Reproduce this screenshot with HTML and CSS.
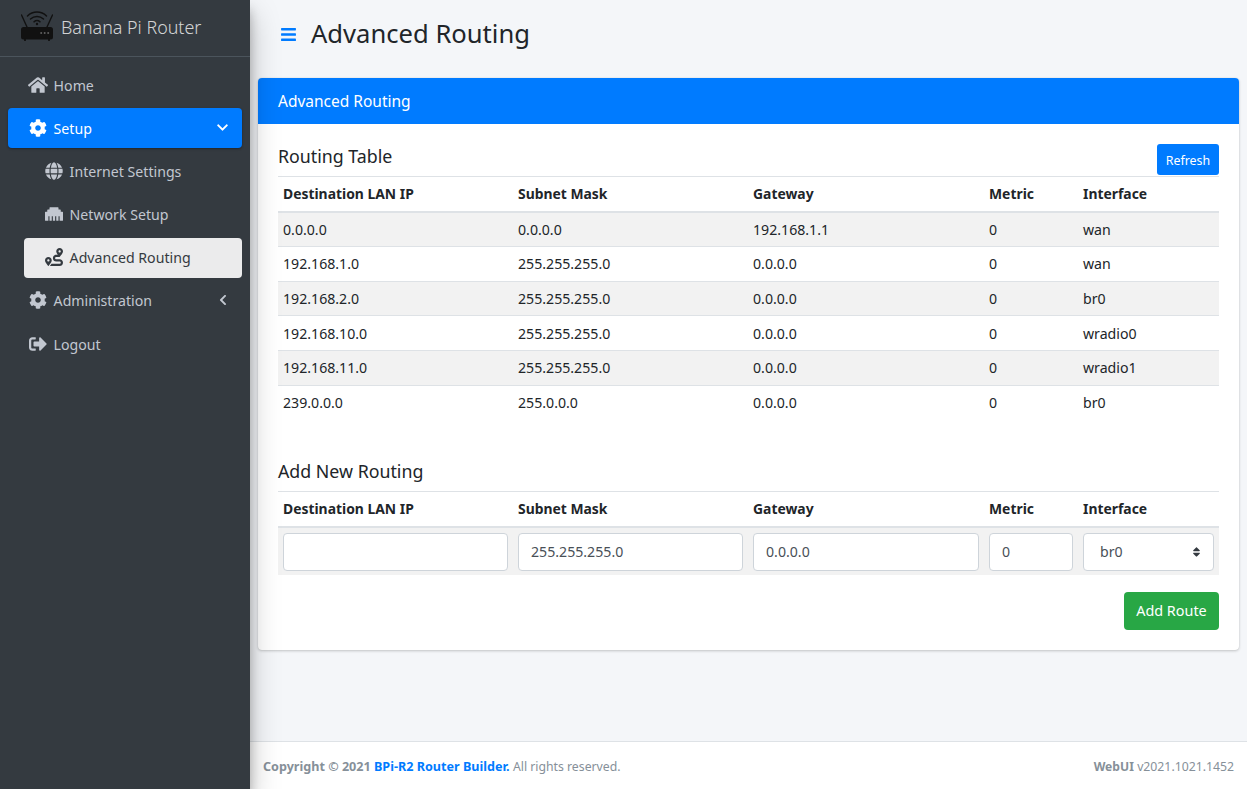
FILE: index.html
```html
<!doctype html>
<html>
<head>
<meta charset="utf-8">
<title>Advanced Routing</title>
<link rel="stylesheet" href="styles.css">
</head>
<body>
<div class="wrapper">
  <aside class="sidebar">
    <div class="brand">
      <svg class="brand-logo" viewBox="0 0 32 30" fill="none" stroke="#111" stroke-linecap="round">
        <path d="M.5 4l5.500 12M31.500 4l-5.500 12" stroke-width="1.400"/>
        <path d="M6.500 5a13.500 13.500 0 0 1 19 0" stroke-width="1.500"/>
        <path d="M9.500 8a9.500 9.500 0 0 1 13 0" stroke-width="1.500"/>
        <path d="M13 10.800a4.800 4.800 0 0 1 6 0" stroke-width="1.500"/>
        <circle cx="16" cy="13" r="1.200" fill="#111" stroke="none"/>
        <rect x="0" y="16" width="32" height="12.500" rx="2.500" fill="#111" stroke="none"/>
        <path d="M4 28.500v1M28 28.500v1" stroke-width="1.800"/>
        <path d="M20 22h.4M23.500 22h.4M27 22h.4" stroke="#777" stroke-width="1.600"/>
      </svg>
      <span class="brand-text">Banana Pi Router</span>
    </div>
    <ul class="nav">
      <li><a class="nav-link"><svg class="nav-icon" viewBox="0 0 576 512"><path d="M280.37 148.26L96 300.11V464a16 16 0 0 0 16 16l112.06-.29a16 16 0 0 0 15.92-16V368a16 16 0 0 1 16-16h64a16 16 0 0 1 16 16v95.64a16 16 0 0 0 16 16.05L464 480a16 16 0 0 0 16-16V300L295.67 148.26a12.19 12.19 0 0 0-15.3 0zM571.6 251.47L488 182.56V44.05a12 12 0 0 0-12-12h-56a12 12 0 0 0-12 12v72.61L318.47 43a48 48 0 0 0-61 0L4.34 251.47a12 12 0 0 0-1.6 16.9l25.5 31A12 12 0 0 0 45.15 301l235.22-193.74a12.19 12.19 0 0 1 15.3 0L530.9 301a12 12 0 0 0 16.9-1.6l25.5-31a12 12 0 0 0-1.7-16.93z"/></svg>Home</a></li>
      <li><a class="nav-link active"><svg class="nav-icon" viewBox="0 0 512 512"><use href="#cog"/></svg>Setup<svg class="nav-arrow" viewBox="0 0 448 512"><path d="M207.029 381.476L12.686 187.132c-9.373-9.373-9.373-24.569 0-33.941l22.667-22.667c9.357-9.357 24.522-9.375 33.901-.04L224 284.505l154.745-154.021c9.379-9.335 24.544-9.317 33.901.04l22.667 22.667c9.373 9.373 9.373 24.569 0 33.941L240.971 381.476c-9.373 9.372-24.569 9.372-33.942 0z"/></svg></a>
        <ul class="subnav">
          <li><a class="nav-link"><svg class="nav-icon" viewBox="0 0 496 512"><path d="M336.500 160C322 70.700 287.800 8 248 8s-74 62.700-88.500 152h177zM152 256c0 22.200 1.200 43.500 3.300 64h185.300c2.100-20.500 3.300-41.800 3.300-64s-1.200-43.500-3.300-64H155.300c-2.100 20.500-3.300 41.800-3.300 64zm324.700-96c-28.600-67.900-86.500-120.400-158-141.600 24.400 33.800 41.200 84.700 50 141.600h108zM177.200 18.400C105.800 39.600 47.800 92.100 19.300 160h108c8.700-56.900 25.500-107.800 49.900-141.600zM487.400 192H372.700c2.100 21 3.300 42.500 3.300 64s-1.200 43-3.300 64h114.600c5.500-20.500 8.600-41.800 8.600-64s-3.100-43.500-8.500-64zM120 256c0-21.500 1.200-43 3.300-64H8.600C3.200 212.500 0 233.800 0 256s3.200 43.500 8.600 64h114.600c-2-21-3.200-42.500-3.200-64zm39.500 96c14.500 89.300 48.700 152 88.500 152s74-62.700 88.500-152h-177zm159.300 141.600c71.400-21.200 129.400-73.700 158-141.600h-108c-8.800 56.900-25.600 107.800-50 141.600zM19.300 352c28.600 67.900 86.500 120.400 158 141.600-24.400-33.800-41.200-84.700-50-141.600h-108z"/></svg>Internet Settings</a></li>
          <li><a class="nav-link"><svg class="nav-icon" viewBox="0 0 512 512"><path d="M496 192h-48v-48c0-8.800-7.200-16-16-16h-48V80c0-8.800-7.200-16-16-16H144c-8.800 0-16 7.200-16 16v48H80c-8.800 0-16 7.200-16 16v48H16c-8.800 0-16 7.200-16 16v224c0 8.800 7.200 16 16 16h80V320h32v128h64V320h32v128h64V320h32v128h64V320h32v128h80c8.800 0 16-7.200 16-16V208c0-8.800-7.200-16-16-16z"/></svg>Network Setup</a></li>
          <li><a class="nav-link current"><svg class="nav-icon" viewBox="0 0 512 512"><path d="M416 320h-96c-17.600 0-32-14.400-32-32s14.400-32 32-32h96s96-107 96-160-43-96-96-96-96 43-96 96c0 25.500 22.200 63.400 45.300 96H320c-52.900 0-96 43.100-96 96s43.100 96 96 96h96c17.600 0 32 14.400 32 32s-14.400 32-32 32H185.500c-16 24.800-33.800 47.700-47.300 64H416c52.900 0 96-43.100 96-96s-43.100-96-96-96zm0-256c17.700 0 32 14.300 32 32s-14.300 32-32 32-32-14.300-32-32 14.300-32 32-32zM96 256c-53 0-96 43-96 96s96 160 96 160 96-107 96-160-43-96-96-96zm0 128c-17.700 0-32-14.300-32-32s14.300-32 32-32 32 14.300 32 32-14.300 32-32 32z"/></svg>Advanced Routing</a></li>
        </ul>
      </li>
      <li><a class="nav-link"><svg class="nav-icon" viewBox="0 0 512 512"><use href="#cog"/></svg>Administration<svg class="nav-arrow small" viewBox="0 0 320 512"><path d="M34.520 239.030L228.870 44.690c9.370-9.370 24.570-9.370 33.940 0l22.670 22.670c9.360 9.360 9.370 24.520.04 33.900L131.490 256l154.020 154.750c9.340 9.380 9.320 24.540-.04 33.900l-22.670 22.670c-9.370 9.370-24.570 9.370-33.940 0L34.520 272.970c-9.370-9.370-9.370-24.570 0-33.940z"/></svg></a></li>
      <li><a class="nav-link"><svg class="nav-icon" viewBox="0 0 512 512"><path d="M497 273L329 441c-15 15-41 4.500-41-17v-96H152c-13.300 0-24-10.700-24-24v-96c0-13.300 10.700-24 24-24h136V88c0-21.400 25.900-32 41-17l168 168c9.300 9.400 9.300 24.600 0 34zM192 436v-40c0-6.600-5.400-12-12-12H96c-17.700 0-32-14.300-32-32V160c0-17.700 14.300-32 32-32h84c6.600 0 12-5.400 12-12V76c0-6.600-5.400-12-12-12H96c-53 0-96 43-96 96v192c0 53 43 96 96 96h84c6.600 0 12-5.400 12-12z"/></svg>Logout</a></li>
    </ul>
    <svg class="defs" width="0" height="0"><defs><path id="cog" d="M487.400 315.700l-42.600-24.600c4.300-23.200 4.300-47 0-70.200l42.600-24.600c4.900-2.800 7.100-8.600 5.500-14-11.100-35.600-30-67.800-54.700-94.600-3.800-4.100-10-5.100-14.800-2.300L380.800 110c-17.900-15.400-38.500-27.300-60.800-35.100V25.800c0-5.600-3.900-10.500-9.400-11.700-36.700-8.200-74.300-7.800-109.200 0-5.500 1.200-9.400 6.100-9.400 11.700V75c-22.200 7.900-42.800 19.800-60.800 35.100L88.700 85.500c-4.900-2.800-11-1.900-14.800 2.300-24.700 26.700-43.600 58.900-54.700 94.600-1.700 5.400.6 11.200 5.500 14L67.300 221c-4.300 23.200-4.300 47 0 70.200l-42.600 24.600c-4.900 2.800-7.100 8.600-5.500 14 11.100 35.600 30 67.800 54.700 94.600 3.800 4.100 10 5.100 14.800 2.300l42.600-24.600c17.900 15.400 38.500 27.300 60.800 35.100v49.200c0 5.600 3.900 10.500 9.400 11.700 36.700 8.200 74.300 7.800 109.200 0 5.500-1.200 9.400-6.100 9.400-11.700v-49.200c22.200-7.900 42.800-19.800 60.800-35.100l42.600 24.600c4.900 2.800 11 1.900 14.800-2.300 24.700-26.700 43.600-58.900 54.700-94.600 1.500-5.500-.7-11.300-5.600-14.100zM256 336c-44.100 0-80-35.900-80-80s35.900-80 80-80 80 35.900 80 80-35.900 80-80 80z"/></defs></svg>
  </aside>

  <div class="main">
    <header class="page-head">
      <svg class="bars" viewBox="0 0 448 512"><path d="M16 132h416c8.837 0 16-7.163 16-16V76c0-8.837-7.163-16-16-16H16C7.163 60 0 67.163 0 76v40c0 8.837 7.163 16 16 16zm0 160h416c8.837 0 16-7.163 16-16v-40c0-8.837-7.163-16-16-16H16c-8.837 0-16 7.163-16 16v40c0 8.837 7.163 16 16 16zm0 160h416c8.837 0 16-7.163 16-16v-40c0-8.837-7.163-16-16-16H16c-8.837 0-16 7.163-16 16v40c0 8.837 7.163 16 16 16z"/></svg>
      <h1>Advanced Routing</h1>
    </header>

    <section class="card">
      <div class="card-header">Advanced Routing</div>
      <div class="card-body">
        <div class="section-head">
          <h5>Routing Table</h5>
          <button class="btn btn-refresh">Refresh</button>
        </div>
        <table class="route-table striped">
          <colgroup><col class="col-ip"><col class="col-ip"><col class="col-gw"><col class="col-metric"><col class="col-if"></colgroup>
          <thead><tr><th>Destination LAN IP</th><th>Subnet Mask</th><th>Gateway</th><th>Metric</th><th>Interface</th></tr></thead>
          <tbody>
            <tr><td>0.0.0.0</td><td>0.0.0.0</td><td>192.168.1.1</td><td>0</td><td>wan</td></tr>
            <tr><td>192.168.1.0</td><td>255.255.255.0</td><td>0.0.0.0</td><td>0</td><td>wan</td></tr>
            <tr><td>192.168.2.0</td><td>255.255.255.0</td><td>0.0.0.0</td><td>0</td><td>br0</td></tr>
            <tr><td>192.168.10.0</td><td>255.255.255.0</td><td>0.0.0.0</td><td>0</td><td>wradio0</td></tr>
            <tr><td>192.168.11.0</td><td>255.255.255.0</td><td>0.0.0.0</td><td>0</td><td>wradio1</td></tr>
            <tr><td>239.0.0.0</td><td>255.0.0.0</td><td>0.0.0.0</td><td>0</td><td>br0</td></tr>
          </tbody>
        </table>

        <div class="section-head add-head">
          <h5>Add New Routing</h5>
        </div>
        <table class="route-table striped">
          <colgroup><col class="col-ip"><col class="col-ip"><col class="col-gw"><col class="col-metric"><col class="col-if"></colgroup>
          <thead><tr><th>Destination LAN IP</th><th>Subnet Mask</th><th>Gateway</th><th>Metric</th><th>Interface</th></tr></thead>
          <tbody>
            <tr class="form-row">
              <td><input class="field" type="text" value=""></td>
              <td><input class="field" type="text" value="255.255.255.0"></td>
              <td><input class="field" type="text" value="0.0.0.0"></td>
              <td><input class="field" type="text" value="0"></td>
              <td><div class="field select-field">br0<svg class="sort" viewBox="0 0 320 512"><path d="M41 288h238c21.400 0 32.100 25.900 17 41L177 448c-9.400 9.400-24.600 9.400-33.900 0L24 329c-15.100-15.100-4.400-41 17-41zm255-105L177 64c-9.400-9.400-24.600-9.400-33.900 0L24 183c-15.100 15.100-4.400 41 17 41h238c21.400 0 32.100-25.900 17-41z"/></svg></div></td>
            </tr>
          </tbody>
        </table>
        <div class="actions"><button class="btn btn-add">Add Route</button></div>
      </div>
    </section>

    <footer class="footer">
      <div><b>Copyright &copy; 2021 <a class="footer-link">BPi-R2 Router Builder.</a></b> <span class="footer-note">All rights reserved.</span></div>
      <div><b class="footer-ui">WebUI</b> <span class="footer-note">v2021.1021.1452</span></div>
    </footer>
  </div>
</div>
</body>
</html>
```

FILE: styles.css
```css
* {
	box-sizing: border-box;
}
html, body {
	height: 100%;
}
body {
	margin: 0;
	font-family: "Noto Sans", "Liberation Sans", sans-serif;
	font-size: 14.15px;
	line-height: 24px;
	color: #212529;
	background: #f4f6f9;
	overflow: hidden;
}
.wrapper {
	display: flex;
	height: 100%;
}

/* sidebar */
.sidebar {
	flex: 0 0 250px;
	background: #343a40;
	box-shadow: 0 14px 28px rgba(0,0,0,.25), 0 10px 10px rgba(0,0,0,.22);
	z-index: 2;
}
.brand {
	display: flex;
	align-items: center;
	height: 57px;
	padding-left: 21px;
	padding-bottom: 3px;
	border-bottom: 1px solid #4b545c;
}
.brand-logo {
	width: 32px;
	height: 30px;
	margin-top: -2px;
}
.brand-text {
	margin-left: 8px;
	padding-top: 1px;
	font-size: 17.9px;
	font-weight: 300;
	color: rgba(255,255,255,.8);
}
.nav, .subnav {
	list-style: none;
	margin: 0;
	padding: 0;
}
.nav {
	padding: 8px 8px 0;
}
.subnav {
	padding-left: 16px;
}
.nav-link {
	display: flex;
	align-items: center;
	height: 40px;
	margin-bottom: 3.2px;
	padding-left: 20px;
	padding-top: 1px;
	border-radius: 4px;
	color: #c2c7d0;
}
.nav-icon {
	width: 20px;
	height: 18px;
	margin-right: 5.6px;
	margin-top: -2px;
	fill: currentColor;
}
.nav-arrow {
	width: 11px;
	height: 13px;
	margin-left: auto;
	margin-right: 14.500px;
	margin-top: -3px;
	fill: currentColor;
}
.nav-arrow.small {
	width: 8px;
	height: 12px;
	margin-right: 15px;
	margin-top: -2px;
}
.nav-link.active {
	background: #007bff;
	color: #fff;
	box-shadow: 0 1px 3px rgba(0,0,0,.12), 0 1px 2px rgba(0,0,0,.24);
}
.nav-link.current {
	background: rgba(255,255,255,.9);
	color: #343a40;
}

/* main */
.main {
	flex: 1;
	min-width: 0;
	display: flex;
	flex-direction: column;
}
.page-head {
	display: flex;
	align-items: center;
	height: 68px;
	padding-left: 31px;
}
.bars {
	width: 15px;
	height: 17px;
	fill: #007bff;
}
h1 {
	margin: 0 0 0 15px;
	font-size: 25.6px;
	font-weight: 400;
	line-height: 1.2;
}
.card {
	margin: 10px 8px 0;
	background: #fff;
	border-radius: 4px;
	box-shadow: 0 0 1px rgba(0,0,0,.13), 0 1px 3px rgba(0,0,0,.2);
}
.card-header {
	height: 46px;
	padding: 0 20px;
	line-height: 46px;
	font-size: 15.5px;
	color: #fff;
	background: #007bff;
	border-radius: 4px 4px 0 0;
}
.card-body {
	padding: 20px;
}
.section-head {
	display: flex;
	justify-content: space-between;
	align-items: flex-end;
	height: 33px;
	border-bottom: 1px solid #dee2e6;
}
h5 {
	margin: 0 0 8px;
	font-size: 17.8px;
	font-weight: 400;
	line-height: 24px;
}
.add-head {
	margin-top: 40px;
}
.btn {
	border: 0;
	color: #fff;
	font-family: inherit;
	cursor: pointer;
}
.btn-refresh {
	height: 31px;
	width: 62px;
	margin-bottom: 1px;
	padding: 1px 0 0;
	font-size: 12.4px;
	background: #007bff;
	border-radius: 3px;
}
.route-table {
	width: 941px;
	border-collapse: collapse;
	table-layout: fixed;
}
.col-ip { width: 235px; }
.col-gw { width: 236px; }
.col-metric { width: 94px; }
.col-if { width: 141px; }
.route-table th, .route-table td {
	padding: 5.3px 5px 4.3px;
	text-align: left;
	vertical-align: top;
	white-space: nowrap;
}
.route-table th {
	border-bottom: 2px solid #dee2e6;
	font-size: 13.9px;
	font-weight: 700;
}
.route-table td {
	border-bottom: 1px solid #dee2e6;
}
.route-table tr:last-child td {
	border-bottom: 0;
}
.route-table .form-row td {
	padding: 5px 5px 4px;
}
.striped tbody tr:nth-child(odd) {
	background: #f2f2f2;
}
.field {
	display: block;
	width: 100%;
	height: 38px;
	padding: 6px 12px;
	border: 1px solid #ced4da;
	border-radius: 4px;
	background: #fff;
	color: #495057;
	font: inherit;
	line-height: 24px;
}
.select-field {
	display: flex;
	align-items: center;
	justify-content: space-between;
	padding-left: 16px;
	padding-right: 12px;
}
.sort {
	width: 9px;
	height: 12px;
	fill: #343a40;
}
.actions {
	display: flex;
	justify-content: flex-end;
	margin-top: 17px;
}
.btn-add {
	width: 95px;
	height: 38px;
	font-size: 14.4px;
	background: #28a745;
	border-radius: 4px;
}
.footer {
	display: flex;
	justify-content: space-between;
	align-items: center;
	height: 48px;
	margin-top: auto;
	padding: 2px 13px 0;
	border-top: 1px solid #dee2e6;
	font-size: 12.6px;
	color: #869099;
	background: #fff;
}
.footer-note {
	font-size: 12.25px;
}
.footer-ui {
	font-size: 12.1px;
}
.footer-link {
	color: #007bff;
}
```
